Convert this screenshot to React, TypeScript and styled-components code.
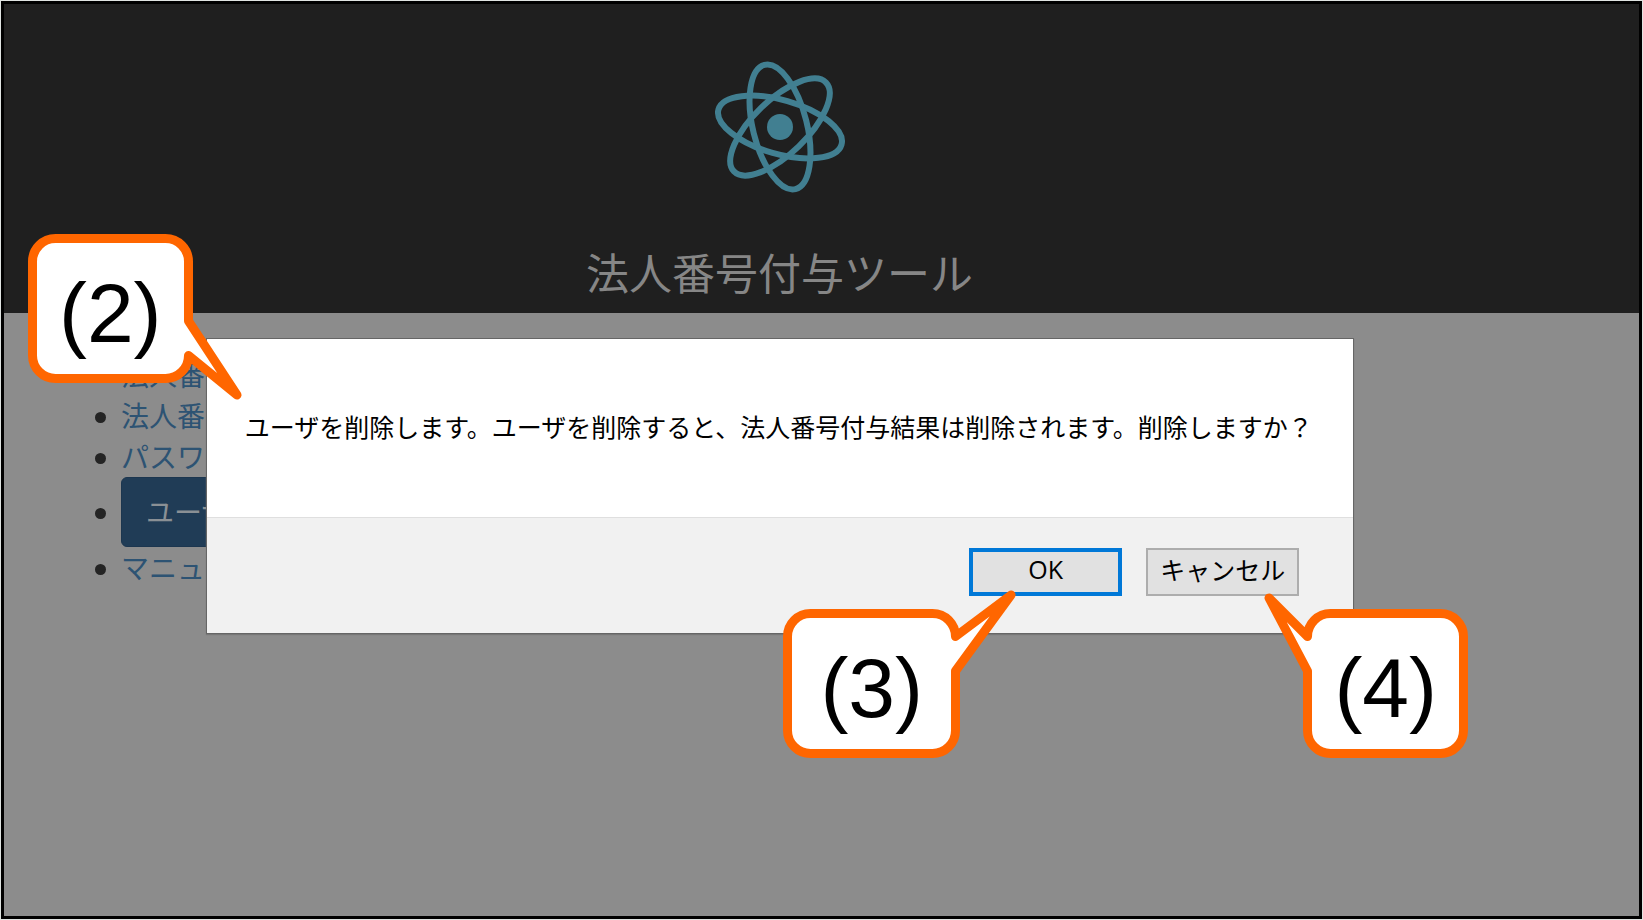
import React from 'react';
import styled, { createGlobalStyle } from 'styled-components';

const GlobalStyle = createGlobalStyle`
  * { box-sizing: border-box; }
  body {
    margin: 0;
    background: #dfe3e1;
    font-family: "Liberation Sans", "Noto Sans CJK JP", sans-serif;
  }
`;

const Page = styled.div`
  display: flex;
  flex-direction: column;
  min-height: calc(100vh - 2px);
  margin: 1px;
  border: 3px solid #000;
  background: #8c8c8c;
`;

const Header = styled.header`
  display: flex;
  flex-direction: column;
  align-items: center;
  gap: 42px;
  padding: 53px 84px 10px 0;
  background: #1f1f1f;
`;

const Logo = styled.svg`
  width: 140px;
  height: 140px;
`;

const Title = styled.h1`
  margin: 0;
  font-size: 43px;
  line-height: 64px;
  font-weight: 400;
  font-family: "Noto Sans CJK JP", sans-serif;
  color: #868686;
`;

const Main = styled.main`
  position: relative;
  flex: 1;
`;

const Menu = styled.ul`
  margin: 0;
  padding: 41px 0 0 117px;
  list-style: none;
  font-family: "Noto Sans CJK JP", sans-serif;
  font-size: 28px;
  line-height: 41px;
`;

const MenuItem = styled.li`
  display: flex;
  align-items: center;

  &::before {
    content: "";
    width: 11px;
    height: 11px;
    margin: 3px 15px 0 -26px;
    border-radius: 50%;
    background: #242424;
  }
`;

const MenuLink = styled.a`
  color: #2d5373;
  font-weight: 400;
  text-decoration: none;
`;

const MenuButton = styled.button`
  height: 70px;
  padding: 0 24px 2px;
  border: 1px solid #1c364f;
  border-radius: 6px;
  background: #203c56;
  color: #8a9095;
  font: inherit;
  font-weight: 400;
`;

const DialogLayer = styled.div`
  position: absolute;
  top: 25px;
  left: 0;
  right: 83px;
  display: flex;
  justify-content: center;
`;

const Dialog = styled.div`
  position: relative;
  width: 74%;
  min-width: 1147px;
  border: 1px solid #666;
  background: #fff;
  box-shadow: 0 1px 1px #777;
`;

const Message = styled.p`
  margin: 0;
  padding: 66px 0 70px 38px;
  font-family: "Noto Sans CJK JP", sans-serif;
  font-size: 25px;
  line-height: 42px;
  white-space: nowrap;
  color: #000;
`;

const Actions = styled.div`
  display: flex;
  justify-content: flex-end;
  gap: 24px;
  padding: 30px 54px 37px;
  border-top: 1px solid #dfdfdf;
  background: #f1f1f1;
`;

const ActionButton = styled.button<{ $primary?: boolean }>`
  width: 153px;
  height: 48px;
  padding: 0 0 6px;
  border: ${({ $primary }) => ($primary ? '4px solid #0078d7' : '2px solid #adadad')};
  border-radius: 0;
  background: #e1e1e1;
  color: #000;
  font-family: ${({ $primary }) => ($primary ? '"Open Sans"' : '"Noto Sans CJK JP"')}, sans-serif;
  font-size: 25px;
  line-height: 34px;
  white-space: nowrap;
`;

const CalloutBox = styled.div<{ $top: number; $left?: number; $right?: number; $width: number }>`
  position: absolute;
  top: ${({ $top }) => $top}px;
  ${({ $left }) => $left !== undefined && `left: ${$left}px;`}
  ${({ $right }) => $right !== undefined && `right: ${$right}px;`}
  width: ${({ $width }) => $width}px;
  height: 149px;
  display: flex;
  align-items: center;
  justify-content: center;
  padding-top: 8px;
  font-size: 84px;
  line-height: 96px;
  pointer-events: none;
`;

const Bubble = styled.svg`
  position: absolute;
  top: 0;
  left: 0;
  overflow: visible;
`;

const Label = styled.span`
  position: relative;
`;

interface CalloutProps {
  label: string;
  top: number;
  left?: number;
  right?: number;
  width: number;
  path: string;
}

const Callout = ({ label, top, left, right, width, path }: CalloutProps) => (
  <CalloutBox $top={top} $left={left} $right={right} $width={width}>
    <Bubble width={width} height={149} aria-hidden="true">
      <path d={path} fill="#fff" stroke="#ff6600" strokeWidth="9" strokeLinejoin="round" />
    </Bubble>
    <Label>{label}</Label>
  </CalloutBox>
);

const callouts: CalloutProps[] = [
  {
    label: '(2)',
    top: -105,
    left: -179,
    width: 165,
    path: 'M27.5 4.5H137.5A23 23 0 0 1 160.5 27.5V87L209 161L160.5 121.5A23 23 0 0 1 137.5 144.5H27.5A23 23 0 0 1 4.5 121.5V27.5A23 23 0 0 1 27.5 4.5Z',
  },
  {
    label: '(3)',
    top: 270,
    right: 393,
    width: 177,
    path: 'M27.5 4.5H149.5A23 23 0 0 1 172.5 27.5L228 -14L172.5 62V121.5A23 23 0 0 1 149.5 144.5H27.5A23 23 0 0 1 4.5 121.5V27.5A23 23 0 0 1 27.5 4.5Z',
  },
  {
    label: '(4)',
    top: 270,
    right: -115,
    width: 165,
    path: 'M27.5 4.5H137.5A23 23 0 0 1 160.5 27.5V121.5A23 23 0 0 1 137.5 144.5H27.5A23 23 0 0 1 4.5 121.5V62L-34 -11L4.5 27.5A23 23 0 0 1 27.5 4.5Z',
  },
];

export default function App() {
  return (
    <>
      <GlobalStyle />
      <Page>
        <Header>
          <Logo viewBox="-70 -70 140 140" aria-hidden="true">
            <g fill="none" stroke="#417f91" strokeWidth="6">
              {[16, 76, 136].map((angle) => (
                <ellipse key={angle} rx="64" ry="27" transform={`rotate(${angle})`} />
              ))}
            </g>
            <circle r="13" fill="#417f91" />
          </Logo>
          <Title>法人番号付与ツール</Title>
        </Header>
        <Main>
          <Menu>
            <MenuItem><MenuLink href="#numbers">法人番</MenuLink></MenuItem>
            <MenuItem><MenuLink href="#results">法人番</MenuLink></MenuItem>
            <MenuItem><MenuLink href="#password">パスワ</MenuLink></MenuItem>
            <MenuItem><MenuButton type="button">ユーザ</MenuButton></MenuItem>
            <MenuItem><MenuLink href="#manual">マニュ</MenuLink></MenuItem>
          </Menu>
          <DialogLayer>
            <Dialog role="dialog" aria-modal="true" aria-labelledby="dialog-message">
              <Message id="dialog-message">
                ユーザを削除します。ユーザを削除すると、法人番号付与結果は削除されます。削除しますか？
              </Message>
              <Actions>
                <ActionButton type="button" $primary>OK</ActionButton>
                <ActionButton type="button">キャンセル</ActionButton>
              </Actions>
              {callouts.map((callout) => (
                <Callout key={callout.label} {...callout} />
              ))}
            </Dialog>
          </DialogLayer>
        </Main>
      </Page>
    </>
  );
}
